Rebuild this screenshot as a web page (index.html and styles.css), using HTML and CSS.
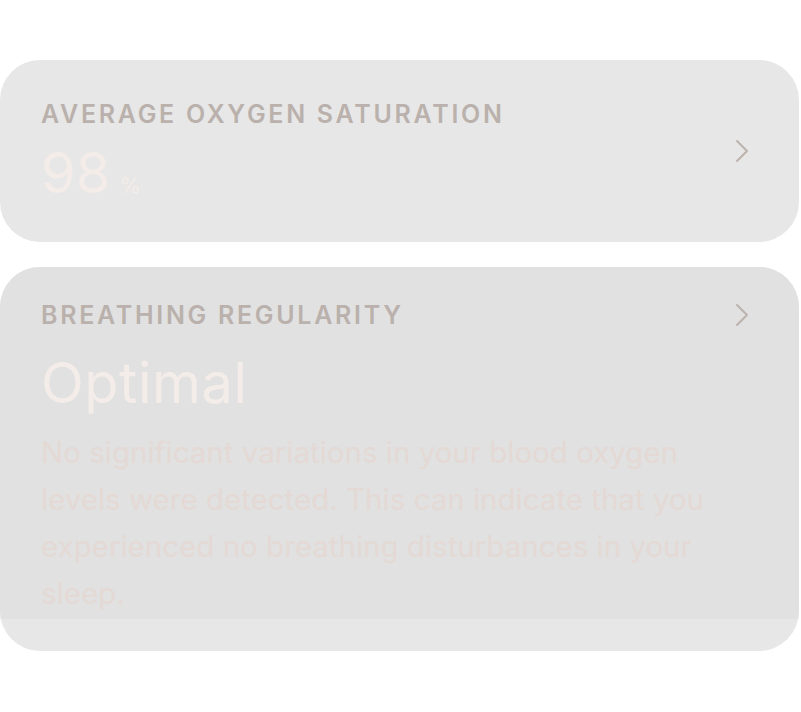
FILE: index.html
```html
<!DOCTYPE html>
<html lang="en">
<head>
    <meta charset="UTF-8">
    <meta name="viewport" content="width=device-width, initial-scale=1.0">
    <title>Sleep oxygen</title>
    <link rel="stylesheet" href="styles.css">
</head>
<body>
    <div class="list">
        <div class="card card-sat">
            <div class="card-main">
                <div class="label">Average oxygen saturation</div>
                <div class="value">98<span class="unit">%</span></div>
            </div>
            <svg class="chevron" width="14" height="24" viewBox="0 0 14 24">
                <path d="M2 2 L12 12 L2 22" fill="none" stroke="#bcb3ae" stroke-width="2" stroke-linecap="round" stroke-linejoin="round"/>
            </svg>
        </div>

        <div class="card card-breath">
            <div class="card-body">
                <div class="row">
                    <div class="label">Breathing regularity</div>
                    <svg class="chevron" width="14" height="24" viewBox="0 0 14 24">
                        <path d="M2 2 L12 12 L2 22" fill="none" stroke="#bcb3ae" stroke-width="2" stroke-linecap="round" stroke-linejoin="round"/>
                    </svg>
                </div>
                <div class="status">Optimal</div>
                <p class="desc">No significant variations in your blood oxygen levels were detected. This can indicate that you experienced no breathing disturbances in your sleep.</p>
            </div>
        </div>
    </div>
</body>
</html>
```

FILE: styles.css
```css
body {
    margin: 0;
    background: #fff;
    font-family: 'Inter', 'Noto Sans', sans-serif;
}
.list {
    width: 799px;
    padding-top: 60px;
    display: flex;
    flex-direction: column;
    gap: 25px;
}
.card {
    background: #e7e7e7;
    border-radius: 40px;
    overflow: hidden;
}
.card-sat {
    height: 182px;
    box-sizing: border-box;
    padding: 39px 50px 0 41px;
    display: flex;
    align-items: flex-start;
    justify-content: space-between;
}
.card-sat .chevron {
    align-self: center;
    margin-top: -39px;
}
.label {
    font-size: 25px;
    font-weight: 600;
    letter-spacing: 2.7px;
    text-transform: uppercase;
    color: #bab1ac;
    line-height: 30px;
}
.value {
    margin-top: 12px;
    font-size: 56px;
    line-height: 64px;
    color: #f3ece8;
    font-weight: 400;
}
.unit {
    font-size: 22px;
    margin-left: 9px;
}
.card-breath {
    padding-bottom: 32px;
}
.card-body {
    background: #e1e1e1;
    padding: 33px 50px 2px 41px;
}
.row {
    display: flex;
    justify-content: space-between;
    align-items: center;
}
.status {
    font-size: 56px;
    line-height: 64px;
    letter-spacing: 0.5px;
    color: #f3ece8;
    margin-top: 21px;
}
.desc {
    margin: 14px 0 0;
    font-size: 29.5px;
    line-height: 47px;
    color: #e4d9d4;
    max-width: 700px;
}
```
